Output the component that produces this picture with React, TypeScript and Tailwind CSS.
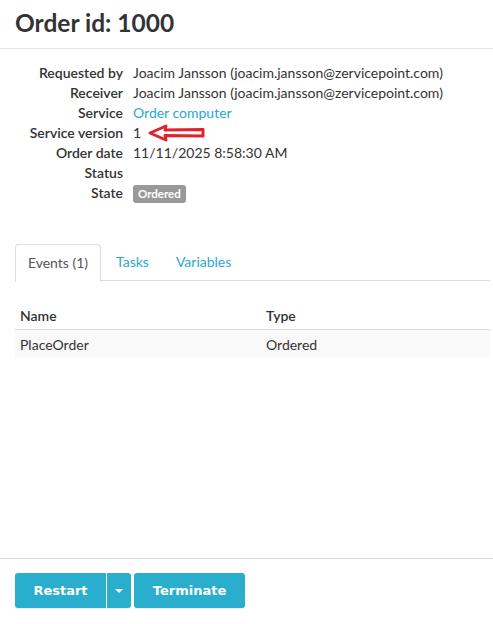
import React from "react";

const DETAILS: { label: string; value: React.ReactNode }[] = [
  { label: "Requested by", value: "Joacim Jansson (joacim.jansson@zervicepoint.com)" },
  { label: "Receiver", value: "Joacim Jansson (joacim.jansson@zervicepoint.com)" },
  { label: "Service", value: <a className="text-[#2aa8d1]">Order computer</a> },
  { label: "Service version", value: "1" },
  { label: "Order date", value: "11/11/2025 8:58:30 AM" },
  { label: "Status", value: "" },
  {
    label: "State",
    value: (
      <span className="inline-block rounded-[3px] bg-[#999999] px-[5px] text-[11.5px] font-bold leading-[18px] text-white">
        Ordered
      </span>
    ),
  },
];

function RedArrow() {
  // hand drawn annotation arrow pointing at the version value
  return (
    <svg width="60" height="20" viewBox="0 0 60 20" className="absolute left-[147px] top-[123px]">
      <path
        d="M3 10 L19 3 L18 7 L56 6.5 L56 13 L18 12.5 L19 17 Z"
        fill="white"
        stroke="#e3202b"
        strokeWidth="3"
        strokeLinejoin="round"
      />
    </svg>
  );
}

export default function App() {
  return (
    <div
      className="relative flex h-[624px] w-[493px] flex-col bg-white text-[14px] text-[#333333]"
      style={{ fontFamily: "Lato, 'Open Sans', sans-serif" }}
    >
      <div className="h-[49px] border-b border-[#e7e7e7] pl-[15px] pt-[5px]">
        <h1 className="text-[24.5px] font-bold leading-[36px] text-[#333333]">Order id: 1000</h1>
      </div>

      <div className="pt-[14px]">
        {DETAILS.map((d) => (
          <div key={d.label} className="flex h-[20px] items-center leading-[20px]">
            <div className="w-[123px] shrink-0 text-right font-semibold">{d.label}</div>
            <div className="pl-[10px]">{d.value}</div>
          </div>
        ))}
      </div>
      <RedArrow />

      <div className="mt-[41px] ml-[15px] mr-[3px]">
        <div className="flex h-[37px] border-b border-[#dddddd]">
          <div className="-mb-px flex h-[38px] w-[86px] items-center justify-center rounded-t-[4px] border border-b-0 border-[#dddddd] bg-white pb-[3px] text-[#555555]">
            Events (1)
          </div>
          <div className="flex items-center px-[15px] pb-[2px] text-[#2aa8d1]">Tasks</div>
          <div className="flex items-center px-[12px] pb-[2px] text-[#2aa8d1]">Variables</div>
        </div>

        <div className="mt-[21px]">
          <div className="flex h-[28px] items-center border-b border-[#dddddd] font-semibold">
            <div className="w-[246px] pl-[5px]">Name</div>
            <div className="pl-[5px]">Type</div>
          </div>
          <div className="flex h-[28px] items-center bg-[#f9f9f9]">
            <div className="w-[246px] pl-[5px]">PlaceOrder</div>
            <div className="pl-[5px]">Ordered</div>
          </div>
        </div>
      </div>

      <div className="mt-auto h-[66px] border-t border-[#dddddd] pl-[15px] pt-[14px]">
        <div
          className="flex gap-[3px] text-[13px] font-bold text-white"
          style={{ fontFamily: "'DejaVu Sans', Verdana, sans-serif" }}
        >
          <div className="flex">
            <button className="h-[35px] w-[91px] rounded-l-[3px] bg-[#2aaece] shadow-[0_1px_1px_rgba(0,0,0,0.08)]">
              Restart
            </button>
            <button className="ml-px flex h-[35px] w-[24px] items-center justify-center rounded-r-[3px] bg-[#2aaece] shadow-[0_1px_1px_rgba(0,0,0,0.08)]">
              <span className="h-0 w-0 border-x-[4px] border-t-[4px] border-x-transparent border-t-white" />
            </button>
          </div>
          <button className="h-[35px] w-[111px] rounded-[3px] bg-[#2aaece] shadow-[0_1px_1px_rgba(0,0,0,0.08)]">
            Terminate
          </button>
        </div>
      </div>
    </div>
  );
}
